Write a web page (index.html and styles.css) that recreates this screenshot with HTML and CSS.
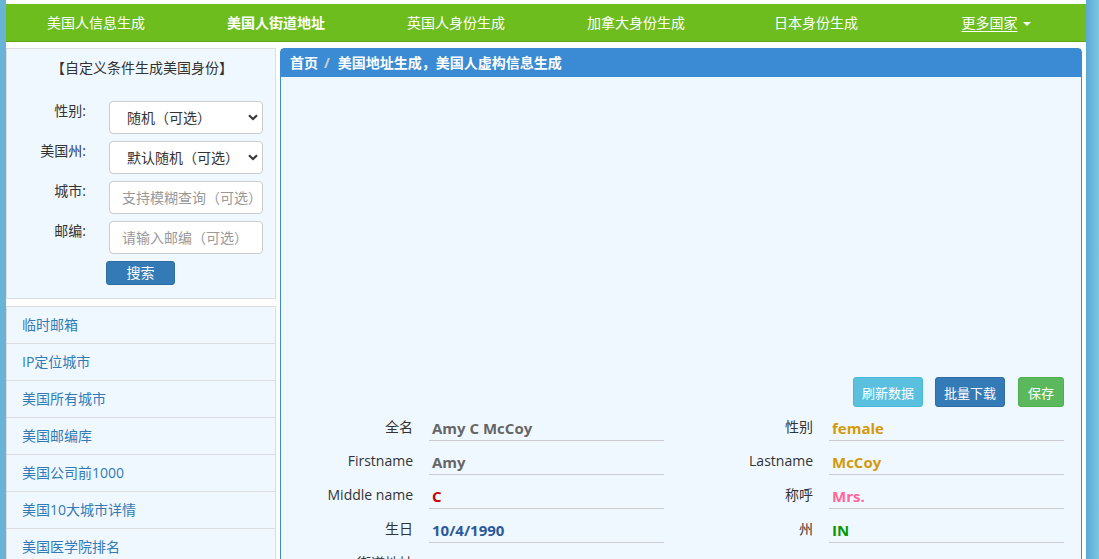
FILE: index.html
```html
<!DOCTYPE html>
<html lang="zh-CN">
<head>
<meta charset="utf-8">
<title>美国人信息生成</title>
<link rel="stylesheet" href="styles.css">
</head>
<body>
<div class="page">
  <nav class="topnav">
    <a class="nav-item">美国人信息生成</a>
    <a class="nav-item active">美国人街道地址</a>
    <a class="nav-item">英国人身份生成</a>
    <a class="nav-item">加拿大身份生成</a>
    <a class="nav-item">日本身份生成</a>
    <a class="nav-item more"><span class="u">更多国家</span><span class="caret"></span></a>
  </nav>

  <div class="content">
    <aside class="sidebar">
      <div class="panel form-panel">
        <div class="form-title">【自定义条件生成美国身份】</div>
        <div class="form-row">
          <label class="form-label">性别:</label>
          <span class="select-wrap">
            <select class="ctl"><option>随机（可选）</option></select>
            <svg class="chev" width="10" height="7" viewBox="0 0 10 7"><path d="M1 1.2 L5 5 L9 1.2" fill="none" stroke="#333" stroke-width="2"/></svg>
          </span>
        </div>
        <div class="form-row">
          <label class="form-label">美国州:</label>
          <span class="select-wrap">
            <select class="ctl"><option>默认随机（可选）</option></select>
            <svg class="chev" width="10" height="7" viewBox="0 0 10 7"><path d="M1 1.2 L5 5 L9 1.2" fill="none" stroke="#333" stroke-width="2"/></svg>
          </span>
        </div>
        <div class="form-row">
          <label class="form-label">城市:</label>
          <input class="ctl inp" type="text" placeholder="支持模糊查询（可选）">
        </div>
        <div class="form-row">
          <label class="form-label">邮编:</label>
          <input class="ctl inp" type="text" placeholder="请输入邮编（可选）">
        </div>
        <button class="btn btn-search">搜索</button>
      </div>

      <ul class="panel link-list">
        <li>临时邮箱</li>
        <li>IP定位城市</li>
        <li>美国所有城市</li>
        <li>美国邮编库</li>
        <li>美国公司前1000</li>
        <li>美国10大城市详情</li>
        <li>美国医学院排名</li>
      </ul>
    </aside>

    <main class="main-panel">
      <div class="crumb"><span>首页</span><span class="sep">/</span><span>美国地址生成，美国人虚构信息生成</span></div>
      <div class="main-body">
        <div class="ad-space"></div>
        <div class="actions">
          <button class="btn btn-info">刷新数据</button>
          <button class="btn btn-primary">批量下载</button>
          <button class="btn btn-success">保存</button>
        </div>
        <div class="data-grid">
          <div class="field"><span class="f-label">全名</span><span class="f-value c-gray">Amy C McCoy</span></div>
          <div class="field"><span class="f-label">性别</span><span class="f-value c-gold">female</span></div>
          <div class="field"><span class="f-label">Firstname</span><span class="f-value c-gray">Amy</span></div>
          <div class="field"><span class="f-label">Lastname</span><span class="f-value c-gold">McCoy</span></div>
          <div class="field"><span class="f-label">Middle name</span><span class="f-value c-red">C</span></div>
          <div class="field"><span class="f-label">称呼</span><span class="f-value c-pink">Mrs.</span></div>
          <div class="field"><span class="f-label">生日</span><span class="f-value c-blue">10/4/1990</span></div>
          <div class="field"><span class="f-label">州</span><span class="f-value c-green">IN</span></div>
          <div class="field field-wide"><span class="f-label">街道地址</span><span class="f-value c-gray"></span></div>
        </div>
      </div>
    </main>
  </div>
</div>
</body>
</html>
```

FILE: styles.css
```css
* { box-sizing: border-box; }

html, body {
  margin: 0;
  padding: 0;
  height: 100%;
  overflow: hidden;
}

body {
  background: linear-gradient(to right, #68b3d6 0%, #6cb9dc 60%, #5aa9d2 98.8%, #7bc6e4 100%);
  font-family: "Open Sans", "Noto Sans CJK SC", sans-serif;
  font-size: 14px;
  color: #333;
}

.page {
  width: 1080px;
  margin-left: 6px;
  min-height: 100%;
  background: #fff;
  padding-top: 4px;
}

/* top nav */
.topnav {
  display: grid;
  grid-template-columns: repeat(6, 180px);
  height: 38px;
  background: #6dbd1e;
  border-bottom: 1px solid #5ea516;
}

.nav-item {
  color: #fff;
  text-align: center;
  line-height: 37px;
  font-size: 14px;
  text-decoration: none;
}

.nav-item.active { font-weight: bold; }

.nav-item .u { text-decoration: underline; text-underline-offset: 3px; }

.caret {
  display: inline-block;
  width: 0;
  height: 0;
  margin-left: 5px;
  vertical-align: middle;
  border-top: 4px solid #fff;
  border-left: 4px solid transparent;
  border-right: 4px solid transparent;
}

/* content */
.content {
  display: flex;
  gap: 4px;
  margin-top: 6px;
}

.sidebar {
  width: 270px;
  flex: none;
}

.panel {
  background: #f0f8ff;
  border: 1px solid #ddd;
}

.form-panel {
  height: 251px;
  padding: 9px 0 0 0;
}

.form-title {
  text-align: center;
  line-height: 20px;
  font-size: 14px;
  padding-left: 2px;
  margin-bottom: 23px;
}

.form-row {
  display: flex;
  align-items: flex-start;
  gap: 23px;
  height: 33px;
  margin-bottom: 7px;
}

.form-label {
  width: 79px;
  text-align: right;
  line-height: 20px;
  font-size: 14px;
}

.select-wrap {
  position: relative;
  display: block;
  width: 154px;
  height: 33px;
}

.ctl {
  display: block;
  width: 154px;
  height: 33px;
  border: 1px solid #ccc;
  border-radius: 4px;
  background: #fff;
  font-family: "Open Sans", "Noto Sans CJK SC", sans-serif;
  font-size: 14px;
  color: #333;
  outline: none;
}

select.ctl {
  appearance: none;
  -webkit-appearance: none;
  padding: 0 0 0 17px;
}

.chev {
  position: absolute;
  right: 5px;
  top: 13px;
}

.inp {
  padding: 0 0 0 12px;
}

.inp::placeholder { color: #999; }

.btn {
  border: 1px solid transparent;
  border-radius: 3px;
  color: #fff;
  font-family: "Open Sans", "Noto Sans CJK SC", sans-serif;
  cursor: pointer;
}

.btn-search {
  display: block;
  margin: 1px 0 0 99px;
  width: 69px;
  height: 24px;
  padding: 0;
  font-size: 14px;
  line-height: 22px;
  background: #337ab7;
  border-color: #2e6da4;
}

.link-list {
  list-style: none;
  margin: 7px 0 0 0;
  padding: 0;
}

.link-list li {
  height: 37px;
  line-height: 36px;
  padding-left: 15px;
  border-bottom: 1px solid #ddd;
  color: #337ab7;
  font-size: 14px;
}

/* main panel */
.main-panel {
  width: 802px;
  flex: none;
  border: 1px solid #3a8bd4;
  border-radius: 4px 4px 0 0;
  background: #f0f8ff;
  height: 560px;
}

.crumb {
  height: 28px;
  background: #3a8bd4;
  color: #fff;
  font-weight: bold;
  font-size: 14px;
  line-height: 28px;
  padding-left: 9px;
}

.crumb .sep {
  color: #ccc;
  padding: 0 8px 0 6px;
}

.ad-space { height: 300px; }

.actions {
  display: flex;
  justify-content: flex-end;
  gap: 12px;
  padding-right: 17px;
  height: 30px;
}

.actions .btn {
  height: 30px;
  padding: 0 8px;
  font-size: 13px;
}

.actions .btn-success { margin-left: 1px; padding: 0 9px; }

.btn-info { background: #5bc0de; border-color: #46b8da; }
.btn-primary { background: #337ab7; border-color: #2e6da4; }
.btn-success { background: #5cb85c; border-color: #4cae4c; }

.data-grid {
  display: grid;
  grid-template-columns: 400px 400px;
}

.field {
  display: grid;
  grid-template-columns: 132px 235px;
  column-gap: 16px;
  height: 34px;
}

.field-wide {
  grid-column: 1 / 3;
  grid-template-columns: 132px 635px;
}

.f-label {
  text-align: right;
  line-height: 20px;
  padding-top: 10px;
  font-size: 14px;
  color: #333;
}

.f-value {
  height: 34px;
  padding: 11px 0 0 3px;
  line-height: 20px;
  border-bottom: 1px solid #ccc;
  font-weight: bold;
  font-size: 15px;
}

.c-gray { color: #666; }
.c-gold { color: #d49a0a; }
.c-red { color: #cc0000; }
.c-pink { color: #ff6699; }
.c-blue { color: #2b5a9c; }
.c-green { color: #009900; }
```
